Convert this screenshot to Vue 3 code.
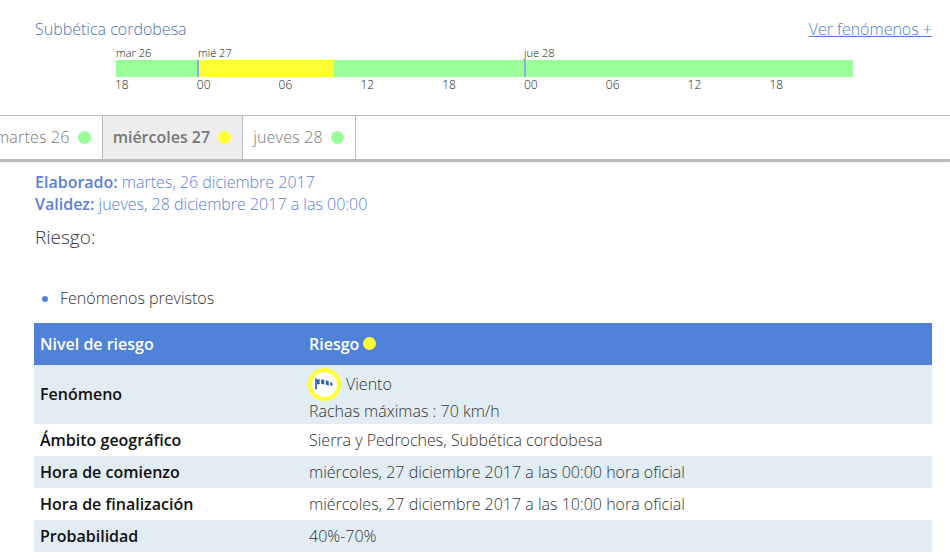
<template>
  <div class="page">
    <div class="zone-head">
      <span class="zone-name">Subbética cordobesa</span>
      <a class="more-link" href="#">Ver fenómenos +</a>
    </div>

    <div class="timeline">
      <div class="days">
        <span v-for="d in days" :key="d.label" :style="{ width: d.width + 'px' }">{{ d.label }}</span>
      </div>
      <div class="bar">
        <div
          v-for="(s, i) in segments"
          :key="i"
          class="segment"
          :class="[s.color, { 'day-start': s.start }]"
          :style="{ width: s.width + 'px' }"
        ></div>
      </div>
      <div class="hours">
        <span v-for="(h, i) in hours" :key="i">{{ h }}</span>
      </div>
    </div>

    <div class="tabs">
      <div v-for="t in tabs" :key="t.label" class="tab" :class="{ active: t.active }">
        {{ t.label }} <span class="dot" :class="t.color"></span>
      </div>
    </div>

    <div class="content">
      <p class="meta"><b>Elaborado:</b> martes, 26 diciembre 2017</p>
      <p class="meta"><b>Validez:</b> jueves, 28 diciembre 2017 a las 00:00</p>
      <h2>Riesgo:</h2>

      <ul>
        <li>Fenómenos previstos</li>
      </ul>

      <table>
        <thead>
          <tr>
            <th class="first">Nivel de riesgo</th>
            <th>Riesgo <span class="dot yellow"></span></th>
          </tr>
        </thead>
        <tbody>
          <tr>
            <th class="tall">Fenómeno</th>
            <td>
              <div class="phenomenon">
                <span class="icon-ring">
                  <svg width="19" height="12" viewBox="0 0 19 12">
                    <path d="M1 0.5v11" stroke="#2f62b0" stroke-width="1.7" fill="none" />
                    <path d="M2 1.5 L5 1.2 Q4 3.5 5 6 L2 6.5 Z" fill="#2f62b0" />
                    <path d="M6.5 1.3 L9.5 2 Q8.5 4.2 9.5 6.4 L6.5 6 Q5.6 3.6 6.5 1.3 Z" fill="#2f62b0" />
                    <path d="M11 2.3 L14 3.6 Q13.2 5.4 14 7.4 L11 6.8 Q10.2 4.5 11 2.3 Z" fill="#2f62b0" />
                    <path d="M15.3 4 L17.5 5.2 Q18 6.5 17 7.6 L15.3 7.4 Q14.7 5.6 15.3 4 Z" fill="#2f62b0" />
                  </svg>
                </span>
                Viento
              </div>
              <div class="gust">Rachas máximas : 70 km/h</div>
            </td>
          </tr>
          <tr v-for="r in rows" :key="r.name">
            <th>{{ r.name }}</th>
            <td>{{ r.value }}</td>
          </tr>
        </tbody>
      </table>
    </div>
  </div>
</template>

<script setup>
const days = [
  { label: 'mar 26', width: 82 },
  { label: 'mié 27', width: 326 },
  { label: 'jue 28', width: 329 }
];

const segments = [
  { color: 'green', width: 81 },
  { color: 'yellow', width: 137, start: true },
  { color: 'green', width: 190 },
  { color: 'green', width: 329, start: true }
];

const hours = ['18', '00', '06', '12', '18', '00', '06', '12', '18'];

const tabs = [
  { label: 'martes 26', color: 'green' },
  { label: 'miércoles 27', color: 'yellow', active: true },
  { label: 'jueves 28', color: 'green' }
];

const rows = [
  { name: 'Ámbito geográfico', value: 'Sierra y Pedroches, Subbética cordobesa' },
  { name: 'Hora de comienzo', value: 'miércoles, 27 diciembre 2017 a las 00:00 hora oficial' },
  { name: 'Hora de finalización', value: 'miércoles, 27 diciembre 2017 a las 10:00 hora oficial' },
  { name: 'Probabilidad', value: '40%-70%' }
];
</script>

<style>
html,
body {
  margin: 0;
  background: #fff;
  overflow: hidden;
}
</style>

<style scoped>
.page {
  width: 950px;
  height: 560px;
  overflow: hidden;
  font-family: "Open Sans", "Liberation Sans", sans-serif;
  font-weight: 300;
  font-size: 16px;
  color: #222;
}

.zone-head {
  display: flex;
  justify-content: space-between;
  padding: 18px 18px 0 35px;
  line-height: 22px;
  color: #4a74b4;
}

.more-link {
  color: #4a7fd6;
  text-decoration: underline;
}

.timeline {
  margin: 5px 0 0 116px;
  width: 737px;
  font-size: 11px;
  line-height: 16px;
}

.days,
.bar,
.hours {
  display: flex;
}

.days {
  height: 15px;
  color: #111;
}

.bar {
  height: 17px;
}

.segment.green {
  background: #99ff99;
}

.segment.yellow {
  background: #ffff33;
}

.segment.day-start {
  border-left: 2px solid #8fa8e8;
  box-sizing: border-box;
}

.hours {
  margin-top: 1px;
  height: 37px;
  font-size: 12px;
  line-height: 14px;
  margin-left: -1px;
}

.hours span {
  width: 81.8px;
}

.tabs {
  display: flex;
  margin-left: -15px;
  height: 43px;
  border-top: 1px solid #bbb;
  border-bottom: 3px solid #bbb;
  box-shadow: 0 1px 2px #eee;
  width: 965px;
}

.tab {
  display: flex;
  align-items: center;
  gap: 8px;
  padding: 0 11px 0 10px;
  border-right: 1px solid #bbb;
  color: #777;
  line-height: 43px;
  letter-spacing: 0.2px;
}

.tab.active {
  background: #eee;
  font-weight: 600;
  color: #777;
  letter-spacing: 0;
}

.dot {
  display: inline-block;
  width: 13px;
  height: 13px;
  border-radius: 50%;
}

.dot.green {
  background: #99ff99;
}

.dot.yellow {
  background: #ffff33;
}

.content {
  padding: 9px 18px 0 34px;
}

.meta {
  margin: 0 0 0 1px;
  line-height: 22px;
  color: #5c80d8;
}

.meta b {
  font-weight: 600;
}

h2 {
  margin: 9px 0 0 1px;
  font-size: 19px;
  font-weight: 300;
  line-height: 26px;
  color: #334;
}

ul {
  margin: 37px 0 0;
  padding: 0 0 0 26px;
  line-height: 22px;
  color: #4f82d8;
}

li {
  color: #333;
}

li::marker {
  color: #4f82d8;
}

table {
  margin-top: 14px;
  width: 898px;
  border-collapse: collapse;
}

th {
  width: 257px;
  padding: 0 6px;
  text-align: left;
  font-weight: 600;
  color: #111;
}

th.tall {
  padding-bottom: 2px;
}

td {
  padding: 0 6px;
  color: #333;
}

thead tr {
  height: 42px;
  background: #4f82d8;
}

thead th {
  width: auto;
  color: #fff;
}

thead th.first {
  width: 257px;
}

tbody tr {
  height: 32px;
}

tbody tr:nth-child(odd) {
  background: #e1ecf3;
}

.phenomenon {
  display: flex;
  align-items: center;
  gap: 5px;
  height: 34px;
  margin: 2px 0 0 -1px;
}

.icon-ring {
  display: flex;
  align-items: center;
  justify-content: center;
  width: 33px;
  height: 33px;
  box-sizing: border-box;
  border: 4px solid #ffff33;
  border-radius: 50%;
  background: #fff;
}

.gust {
  line-height: 22px;
  margin-top: -1px;
  margin-bottom: 2px;
}
</style>
